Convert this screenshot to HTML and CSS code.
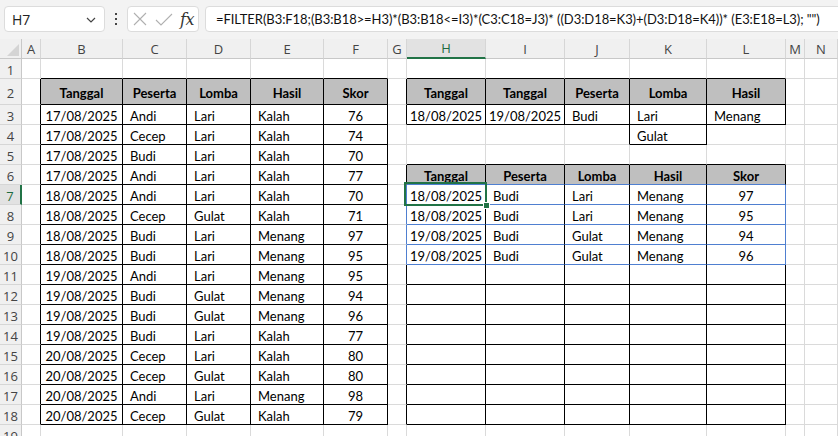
FILE: index.html
```html
<!DOCTYPE html>
<html>
<head>
<meta charset="utf-8">
<link rel="stylesheet" href="styles.css">
</head>
<body>
<div class="toolbar">
  <div class="namebox"><span>H7</span>
    <svg class="chev" width="10" height="6" viewBox="0 0 10 6"><polyline points="1,1 5,5 9,1" fill="none" stroke="#444" stroke-width="1.2"/></svg>
  </div>
  <div class="dots"><svg width="4" height="12" viewBox="0 0 4 12"><rect x="1" y="0" width="2" height="2" fill="#444"/><rect x="1" y="5" width="2" height="2" fill="#444"/><rect x="1" y="10" width="2" height="2" fill="#444"/></svg></div>
  <div class="fxbox">
    <svg width="46" height="26" viewBox="0 0 46 26"><path d="M6 7 L18 19 M18 7 L6 19" stroke="#b0b0b0" stroke-width="1.1" fill="none"/><path d="M28 14 L33 19 L44 8" stroke="#b0b0b0" stroke-width="1.1" fill="none"/></svg>
    <span class="fx">fx</span>
  </div>
  <div class="formula">=FILTER(B3:F18;(B3:B18&gt;=H3)*(B3:B18&lt;=I3)*(C3:C18=J3)* ((D3:D18=K3)+(D3:D18=K4))* (E3:E18=L3); "")</div>
</div>
<div class="sheet">
  <!-- column headers -->
  <div class="corner"><svg width="12" height="12" viewBox="0 0 12 12"><polygon points="12,0 12,12 0,12" fill="#d4d4d4"/></svg></div>
  <div class="ch">A</div><div class="ch">B</div><div class="ch">C</div><div class="ch">D</div><div class="ch">E</div><div class="ch">F</div><div class="ch">G</div><div class="ch sel">H</div><div class="ch">I</div><div class="ch">J</div><div class="ch">K</div><div class="ch">L</div><div class="ch">M</div><div class="ch">N</div>

  <!-- row 1 -->
  <div class="rh">1</div><div></div>
  <div class="b"></div><div class="b"></div><div class="b"></div><div class="b"></div><div class="b"></div>
  <div></div>
  <div class="b"></div><div class="b"></div><div class="b"></div><div class="b"></div><div class="b"></div>
  <div></div><div></div>

  <!-- row 2 -->
  <div class="rh">2</div><div class="r"></div>
  <div class="r b hd">Tanggal</div><div class="r b hd">Peserta</div><div class="r b hd">Lomba</div><div class="r b hd">Hasil</div><div class="r b hd">Skor</div>
  <div class="r"></div>
  <div class="r b hd">Tanggal</div><div class="r b hd">Tanggal</div><div class="r b hd">Peserta</div><div class="r b hd">Lomba</div><div class="r b hd">Hasil</div>
  <div></div><div></div>

  <!-- row 3 -->
  <div class="rh">3</div><div class="r"></div>
  <div class="r b ct">17/08/2025</div><div class="r b lt">Andi</div><div class="r b lt">Lari</div><div class="r b lt">Kalah</div><div class="r b ct">76</div>
  <div class="r"></div>
  <div class="r b ct">18/08/2025</div><div class="r b ct">19/08/2025</div><div class="r b lt">Budi</div><div class="r b lt">Lari</div><div class="r b lt">Menang</div>
  <div></div><div></div>

  <!-- row 4 -->
  <div class="rh">4</div><div class="r"></div>
  <div class="r b ct">17/08/2025</div><div class="r b lt">Cecep</div><div class="r b lt">Lari</div><div class="r b lt">Kalah</div><div class="r b ct">74</div>
  <div></div>
  <div></div><div></div><div class="r"></div><div class="r b lt">Gulat</div><div></div>
  <div></div><div></div>

  <!-- row 5 -->
  <div class="rh">5</div><div class="r"></div>
  <div class="r b ct">17/08/2025</div><div class="r b lt">Budi</div><div class="r b lt">Lari</div><div class="r b lt">Kalah</div><div class="r b ct">70</div>
  <div></div>
  <div class="b"></div><div class="b"></div><div class="b"></div><div class="b"></div><div class="b"></div>
  <div></div><div></div>

  <!-- row 6 -->
  <div class="rh">6</div><div class="r"></div>
  <div class="r b ct">17/08/2025</div><div class="r b lt">Andi</div><div class="r b lt">Lari</div><div class="r b lt">Kalah</div><div class="r b ct">77</div>
  <div class="r"></div>
  <div class="r bu hd">Tanggal</div><div class="r bu hd">Peserta</div><div class="r bu hd">Lomba</div><div class="r bu hd">Hasil</div><div class="r bu hd">Skor</div>
  <div></div><div></div>

  <!-- row 7 -->
  <div class="rh selr">7</div><div class="r"></div>
  <div class="r b ct">18/08/2025</div><div class="r b lt">Andi</div><div class="r b lt">Lari</div><div class="r b lt">Kalah</div><div class="r b ct">70</div>
  <div class="ru"></div>
  <div class="r bu ct active">18/08/2025<span class="selbox"></span><span class="handle"></span></div><div class="r bu lt">Budi</div><div class="r bu lt">Lari</div><div class="r bu lt">Menang</div><div class="ru bu ct">97</div>
  <div></div><div></div>

  <!-- row 8 -->
  <div class="rh">8</div><div class="r"></div>
  <div class="r b ct">18/08/2025</div><div class="r b lt">Cecep</div><div class="r b lt">Gulat</div><div class="r b lt">Kalah</div><div class="r b ct">71</div>
  <div class="ru"></div>
  <div class="r bu ct">18/08/2025</div><div class="r bu lt">Budi</div><div class="r bu lt">Lari</div><div class="r bu lt">Menang</div><div class="ru bu ct">95</div>
  <div></div><div></div>

  <!-- row 9 -->
  <div class="rh">9</div><div class="r"></div>
  <div class="r b ct">18/08/2025</div><div class="r b lt">Budi</div><div class="r b lt">Lari</div><div class="r b lt">Menang</div><div class="r b ct">97</div>
  <div class="ru"></div>
  <div class="r bu ct">19/08/2025</div><div class="r bu lt">Budi</div><div class="r bu lt">Gulat</div><div class="r bu lt">Menang</div><div class="ru bu ct">94</div>
  <div></div><div></div>

  <!-- row 10 -->
  <div class="rh">10</div><div class="r"></div>
  <div class="r b ct">18/08/2025</div><div class="r b lt">Budi</div><div class="r b lt">Lari</div><div class="r b lt">Menang</div><div class="r b ct">95</div>
  <div class="ru"></div>
  <div class="r bu ct">19/08/2025</div><div class="r bu lt">Budi</div><div class="r bu lt">Gulat</div><div class="r bu lt">Menang</div><div class="ru bu ct">96</div>
  <div></div><div></div>

  <!-- row 11 -->
  <div class="rh">11</div><div class="r"></div>
  <div class="r b ct">19/08/2025</div><div class="r b lt">Andi</div><div class="r b lt">Lari</div><div class="r b lt">Menang</div><div class="r b ct">95</div>
  <div class="r"></div>
  <div class="r b"></div><div class="r b"></div><div class="r b"></div><div class="r b"></div><div class="r b"></div>
  <div></div><div></div>

  <!-- row 12 -->
  <div class="rh">12</div><div class="r"></div>
  <div class="r b ct">19/08/2025</div><div class="r b lt">Budi</div><div class="r b lt">Gulat</div><div class="r b lt">Menang</div><div class="r b ct">94</div>
  <div class="r"></div>
  <div class="r b"></div><div class="r b"></div><div class="r b"></div><div class="r b"></div><div class="r b"></div>
  <div></div><div></div>

  <!-- row 13 -->
  <div class="rh">13</div><div class="r"></div>
  <div class="r b ct">19/08/2025</div><div class="r b lt">Budi</div><div class="r b lt">Gulat</div><div class="r b lt">Menang</div><div class="r b ct">96</div>
  <div class="r"></div>
  <div class="r b"></div><div class="r b"></div><div class="r b"></div><div class="r b"></div><div class="r b"></div>
  <div></div><div></div>

  <!-- row 14 -->
  <div class="rh">14</div><div class="r"></div>
  <div class="r b ct">19/08/2025</div><div class="r b lt">Budi</div><div class="r b lt">Lari</div><div class="r b lt">Kalah</div><div class="r b ct">77</div>
  <div class="r"></div>
  <div class="r b"></div><div class="r b"></div><div class="r b"></div><div class="r b"></div><div class="r b"></div>
  <div></div><div></div>

  <!-- row 15 -->
  <div class="rh">15</div><div class="r"></div>
  <div class="r b ct">20/08/2025</div><div class="r b lt">Cecep</div><div class="r b lt">Lari</div><div class="r b lt">Kalah</div><div class="r b ct">80</div>
  <div class="r"></div>
  <div class="r b"></div><div class="r b"></div><div class="r b"></div><div class="r b"></div><div class="r b"></div>
  <div></div><div></div>

  <!-- row 16 -->
  <div class="rh">16</div><div class="r"></div>
  <div class="r b ct">20/08/2025</div><div class="r b lt">Cecep</div><div class="r b lt">Gulat</div><div class="r b lt">Kalah</div><div class="r b ct">80</div>
  <div class="r"></div>
  <div class="r b"></div><div class="r b"></div><div class="r b"></div><div class="r b"></div><div class="r b"></div>
  <div></div><div></div>

  <!-- row 17 -->
  <div class="rh">17</div><div class="r"></div>
  <div class="r b ct">20/08/2025</div><div class="r b lt">Andi</div><div class="r b lt">Lari</div><div class="r b lt">Menang</div><div class="r b ct">98</div>
  <div class="r"></div>
  <div class="r b"></div><div class="r b"></div><div class="r b"></div><div class="r b"></div><div class="r b"></div>
  <div></div><div></div>

  <!-- row 18 -->
  <div class="rh">18</div><div class="r"></div>
  <div class="r b ct">20/08/2025</div><div class="r b lt">Cecep</div><div class="r b lt">Gulat</div><div class="r b lt">Kalah</div><div class="r b ct">79</div>
  <div class="r"></div>
  <div class="r b"></div><div class="r b"></div><div class="r b"></div><div class="r b"></div><div class="r b"></div>
  <div></div><div></div>

  <!-- row 19 -->
  <div class="rh">19</div><div></div>
  <div></div><div></div><div></div><div></div><div></div>
  <div></div>
  <div></div><div></div><div></div><div></div><div></div>
  <div></div><div></div>
</div>
</body>
</html>
```

FILE: styles.css
```css
html, body {
  margin: 0;
  padding: 0;
}
body {
  width: 838px;
  height: 436px;
  overflow: hidden;
  background: #ffffff;
  font-family: Lato, "Liberation Sans", sans-serif;
}

/* ---------- toolbar ---------- */
.toolbar {
  height: 39px;
  box-sizing: border-box;
  background: #f3f3f3;
  display: flex;
  align-items: flex-start;
  padding: 6px 0 0 4px;
  overflow: hidden;
}
.namebox {
  width: 101px;
  height: 26px;
  box-sizing: border-box;
  background: #fff;
  border: 1px solid #dcdcdc;
  border-radius: 4px;
  display: flex;
  align-items: center;
  justify-content: space-between;
  padding: 0 8px 0 7px;
  font-family: "Open Sans", sans-serif;
  font-size: 14px;
  color: #222;
}
.chev {
  margin-top: 2px;
}
.dots {
  width: 22px;
  height: 26px;
  display: flex;
  align-items: center;
  justify-content: center;
}
.fxbox {
  width: 72px;
  height: 26px;
  box-sizing: border-box;
  background: #fff;
  border: 1px solid #dcdcdc;
  border-radius: 4px;
  display: flex;
  align-items: center;
  margin-right: 6px;
}
.fx {
  font-family: "DejaVu Serif", "Liberation Serif", serif;
  font-style: italic;
  font-size: 16px;
  color: #333;
  margin-left: 6px;
  letter-spacing: -0.5px;
}
.formula {
  flex: 1;
  height: 26px;
  box-sizing: border-box;
  background: #fff;
  border: 1px solid #dcdcdc;
  border-radius: 4px;
  margin-right: -14px;
  padding-left: 10px;
  display: flex;
  align-items: center;
  font-family: Lato, sans-serif;
  font-size: 13px;
  letter-spacing: -0.06px;
  color: #111;
  white-space: nowrap;
  overflow: hidden;
}

/* ---------- sheet grid ---------- */
.sheet {
  display: grid;
  grid-template-columns: 22px 19px 82px 64px 64px 73px 64px 19px 79px 79px 65px 77px 79px 19px 33px;
  grid-template-rows: 20px 20px 26px repeat(17, 20px);
  height: 397px;
  overflow: hidden;
}
.sheet > div {
  box-sizing: border-box;
  border-right: 1px solid #dadada;
  border-bottom: 1px solid #dadada;
  display: flex;
  align-items: center;
  padding-top: 2px;
  font-size: 13px;
  color: #000;
  white-space: nowrap;
  overflow: hidden;
}
.sheet > .corner {
  background: #f0f0f0;
  border-right-color: #c8c8c8;
  border-bottom-color: #c8c8c8;
  align-items: flex-end;
  justify-content: flex-end;
  padding: 0 2px 2px 0;
}
.sheet > .ch {
  background: #f0f0f0;
  border-right-color: #d6d6d6;
  border-bottom-color: #c8c8c8;
  justify-content: center;
  padding-top: 0;
  font-family: "Open Sans", sans-serif;
  font-size: 13px;
  color: #444;
}
.sheet > .ch.sel {
  background: #e2e2e2;
  color: #1d6b40;
  border-bottom: 2px solid #217346;
}
.sheet > .rh {
  background: #f0f0f0;
  border-right-color: #c8c8c8;
  border-bottom-color: #d6d6d6;
  justify-content: center;
  padding-top: 2px;
  font-family: "Open Sans", sans-serif;
  font-size: 13px;
  color: #444;
}
.sheet > .rh.selr {
  background: #e2e2e2;
  color: #1d6b40;
  border-right: 2px solid #217346;
}

/* borders */
.sheet > .r { border-right-color: #000; }
.sheet > .b { border-bottom-color: #000; }
.sheet > .ru { border-right-color: #4f7fd0; }
.sheet > .bu { border-bottom-color: #4f7fd0; }

/* cell styles */
.sheet > .hd {
  background: #bfbfbf;
  font-weight: 700;
  justify-content: center;
}
.sheet > .ct { justify-content: center; }
.sheet > .lt { padding-left: 7px; }

/* active cell */
.sheet > .active {
  position: relative;
  overflow: visible;
  z-index: 2;
}
.selbox {
  position: absolute;
  left: -3px;
  top: -3px;
  right: -2px;
  bottom: -2px;
  border: 2px solid #217346;
  pointer-events: none;
}
.handle {
  position: absolute;
  right: -5px;
  bottom: -5px;
  width: 5px;
  height: 5px;
  background: #217346;
  border: 1px solid #fff;
}
```
